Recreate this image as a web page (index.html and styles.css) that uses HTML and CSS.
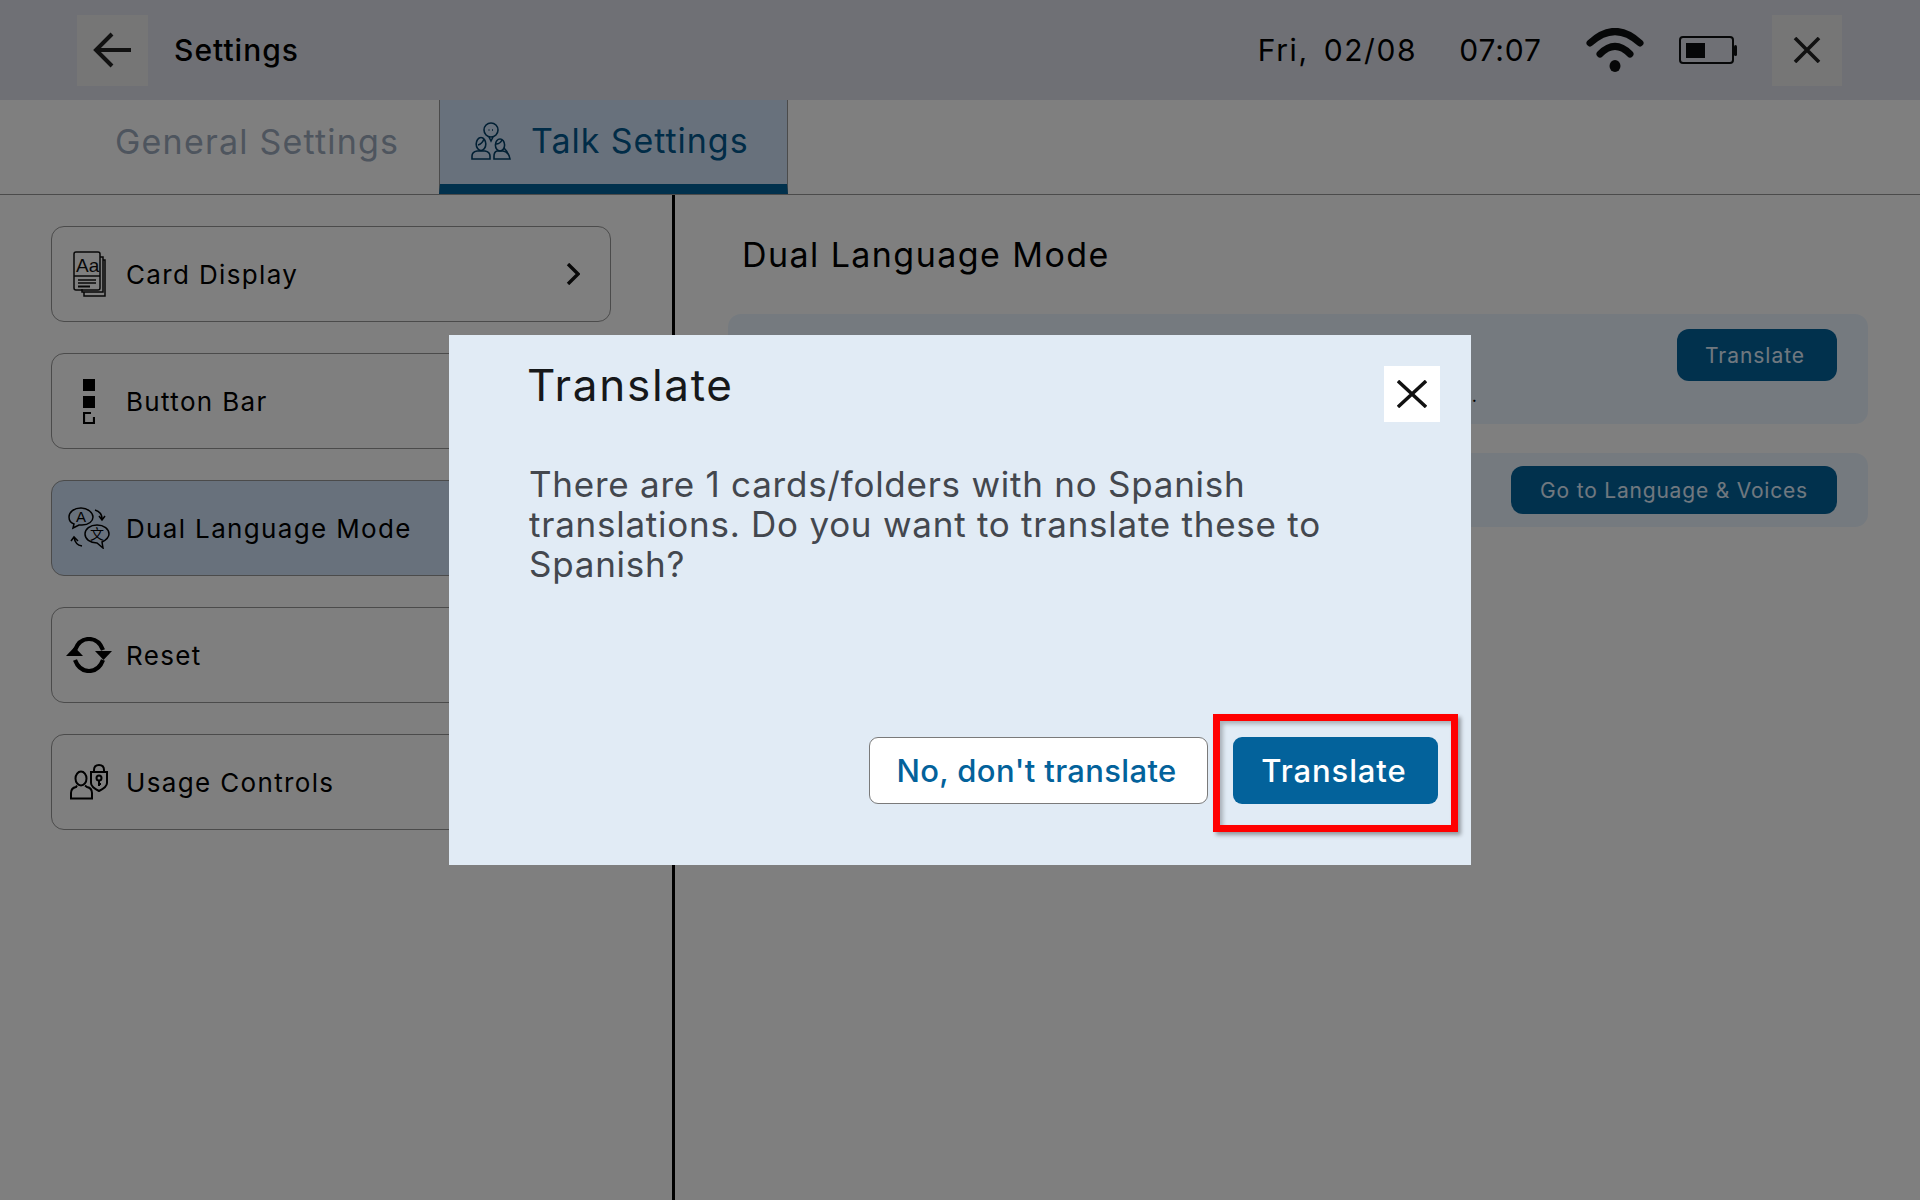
FILE: index.html
```html
<!DOCTYPE html>
<html lang="en">
<head>
<meta charset="utf-8">
<title>Settings</title>
<link rel="stylesheet" href="styles.css">
</head>
<body>
<div class="app">
  <header class="topbar">
    <button class="bar-btn" aria-label="Back">
      <svg width="40" height="36" viewBox="0 0 40 36"><path d="M38 18H3M19 2 3 18l16 16" fill="none" stroke="#222" stroke-width="4"/></svg>
    </button>
    <span class="topbar-title">Settings</span>
    <div class="status">
      <span class="date">Fri,&nbsp; 02/08</span>
      <span class="time">07:07</span>
      <svg class="wifi" width="58" height="44" viewBox="0 0 58 44"><path d="M4 15Q29-8 54 15" fill="none" stroke="#0c0f10" stroke-width="7" stroke-linecap="round"/><path d="M14 26Q29 11 44 26" fill="none" stroke="#0c0f10" stroke-width="7" stroke-linecap="round"/><ellipse cx="29" cy="38" rx="5.5" ry="6" fill="#0c0f10"/></svg>
      <svg class="battery" width="58" height="28" viewBox="0 0 58 28"><rect x="1" y="1" width="53" height="26" rx="3" fill="none" stroke="#0c0f10" stroke-width="2"/><rect x="7" y="7" width="19" height="15" fill="#0c0f10"/><rect x="55" y="9" width="3" height="11" rx="1.5" fill="#0c0f10"/></svg>
      <button class="bar-btn bar-btn-close" aria-label="Close">
        <svg width="28" height="26" viewBox="0 0 28 26"><path d="M2 1l24 24M26 1 2 25" fill="none" stroke="#222" stroke-width="3.6"/></svg>
      </button>
    </div>
  </header>

  <nav class="tabs">
    <div class="tab">General Settings</div>
    <div class="tab tab-active">
      <svg width="40" height="38" viewBox="0 0 40 38" fill="none" stroke="#023e66" stroke-width="1.6">
        <circle cx="20" cy="8" r="7"/><path d="M18 15l2 4 2-4"/><path d="M17.5 8h1M21 8h1"/>
        <ellipse cx="10" cy="22" rx="4.8" ry="6.5"/><path d="M7 23q4-1 6-6"/><path d="M1 37v-3q0-4 5-5h8q5 1 5 5v3z"/>
        <ellipse cx="29" cy="23" rx="4.6" ry="6"/><path d="M25 22q4 0 6-4"/><path d="M23 37v-3q0-4 3-5h6q6 1 7 8z"/><path d="M33 26q3 3 4 6"/>
      </svg>
      <span>Talk Settings</span>
    </div>
  </nav>

  <main class="layout">
    <aside class="sidebar">
      <div class="menu-item">
        <span class="menu-icon">
          <svg width="33" height="46" viewBox="0 0 33 46" fill="none" stroke="#111" stroke-width="1.5">
            <path d="M27 6h3v35H9v-3"/><path d="M30 9h2v36H11v-4"/>
            <rect x="1" y="1" width="26" height="38" rx="2"/>
            <path d="M1 25h26"/><path d="M5 29h18M5 32h18"/><path d="M5 35.5h12" stroke-width="2"/>
            <text class="icon-text-aa" x="3" y="21">Aa</text>
          </svg>
        </span>
        <span class="menu-label">Card Display</span>
        <svg class="chevron" width="14" height="22" viewBox="0 0 14 22"><path d="M2 1l10 10L2 21" fill="none" stroke="#111" stroke-width="3.4"/></svg>
      </div>
      <div class="menu-item">
        <span class="menu-icon">
          <svg width="12" height="45" viewBox="0 0 12 45"><rect width="12" height="12" fill="#000"/><rect y="17" width="12" height="12" fill="#000"/><path d="M8 34H1v10h10v-6" fill="none" stroke="#000" stroke-width="2.2"/></svg>
        </span>
        <span class="menu-label">Button Bar</span>
      </div>
      <div class="menu-item menu-item-active">
        <span class="menu-icon">
          <svg width="42" height="42" viewBox="0 0 42 42" fill="none" stroke="#000" stroke-width="1.5">
            <path d="M13 1C6 1 1 5 1 10c0 3 2 6 5 7l-1 4 6-3h3c7 0 11-4 11-8s-5-9-12-9z"/>
            <path d="M29 18c-7 0-12 4-12 9s5 9 12 9l6 5-1-6c4-2 7-4 7-8 0-5-5-9-12-9z"/>
            <path d="M27 3q7 2 7 9M31 9l3 4 3-4"/><path d="M14 39q-7-1-8-9M3 34l3-4 4 4"/>
            <text class="icon-text-a" x="13" y="15" text-anchor="middle">A</text>
            <text class="icon-text-zh" x="29" y="32" text-anchor="middle">文</text>
          </svg>
        </span>
        <span class="menu-label">Dual Language Mode</span>
      </div>
      <div class="menu-item">
        <span class="menu-icon">
          <svg width="46" height="36" viewBox="0 0 46 36" fill="none" stroke="#000" stroke-width="4.2">
            <path d="M9 13C12 5 17 2 23 2c6 0 11 3 14 11"/><path d="M37 23c-3 8-8 11-14 11-6 0-11-3-14-11"/>
            <path d="M0 19l8.500-9 8.500 9z" fill="#000" stroke="none"/><path d="M29 14h17l-8.500 9z" fill="#000" stroke="none"/>
          </svg>
        </span>
        <span class="menu-label">Reset</span>
      </div>
      <div class="menu-item">
        <span class="menu-icon">
          <svg width="38" height="36" viewBox="0 0 38 36" fill="none" stroke="#000" stroke-width="2">
            <ellipse cx="11" cy="14.500" rx="5.500" ry="7"/>
            <path d="M7 21.500 6 23q-5 1-5 6v5.500h21V29q0-5-5-6l-2-1.500"/>
            <path d="M21 8h16v11q0 4-8 8-8-4-8-8z"/><path d="M24 8V6q0-5 5-5t5 5v2"/>
            <circle cx="29" cy="14" r="2.500"/><path d="M29 16v6M29 20h2"/>
          </svg>
        </span>
        <span class="menu-label">Usage Controls</span>
      </div>
    </aside>

    <section class="content">
      <h2 class="content-title">Dual Language Mode</h2>
      <div class="panel panel-translate">
        <button class="panel-btn panel-btn-short">Translate</button>
        <p class="panel-note">.</p>
      </div>
      <div class="panel panel-voices">
        <button class="panel-btn panel-btn-long">Go to Language &amp; Voices</button>
      </div>
    </section>
  </main>
</div>

<div class="scrim">
  <div class="modal" role="dialog">
    <div class="modal-head">
      <h1 class="modal-title">Translate</h1>
      <button class="modal-close" aria-label="Close">
        <svg width="30" height="28" viewBox="0 0 30 28"><path d="M1 1l28 26M29 1 1 27" fill="none" stroke="#111" stroke-width="3.4"/></svg>
      </button>
    </div>
    <p class="modal-text">There are 1 cards/folders with no Spanish translations. Do you want to translate these to Spanish?</p>
    <div class="modal-actions">
      <button class="btn btn-secondary">No, don't translate</button>
      <div class="highlight-wrap">
        <button class="btn btn-primary">Translate</button>
        <span class="highlight"></span>
      </div>
    </div>
  </div>
</div>
</body>
</html>
```
FILE: styles.css
```css
* { box-sizing: border-box; }
html, body { margin: 0; height: 100%; }
body { font-family: Inter, "Open Sans", sans-serif; background: #fff; color: #000; overflow: hidden; }
button { font-family: inherit; border: 0; padding: 0; }

.app { height: 1200px; display: flex; flex-direction: column; }

.topbar { height: 100px; flex: none; background: #dfe0ea; display: flex; align-items: center; padding-left: 77px; padding-right: 78px; }
.bar-btn { width: 71px; height: 71px; background: #ececec; display: flex; align-items: center; justify-content: center; flex: none; }
.topbar-title { margin-left: 26px; font-size: 30px; font-weight: 500; letter-spacing: 1px; }
.status { margin-left: auto; display: flex; align-items: center; }
.date { font-size: 30px; letter-spacing: 1.6px; word-spacing: -2.5px; }
.time { font-size: 30px; letter-spacing: 0.9px; margin-left: 42px; }
.wifi { margin-left: 44px; }
.battery { margin-left: 35px; }
.bar-btn-close { margin-left: 35px; width: 70px; }

.tabs { height: 95px; flex: none; border-bottom: 1px solid #969696; display: flex; }
.tab { width: 439px; padding-left: 115px; display: flex; align-items: center; font-size: 34px; letter-spacing: 1.2px; color: #9daabd; padding-bottom: 12px; }
.tab-active { width: 349px; padding-left: 31px; gap: 20px; background: #d1e3f9; color: #02598f; letter-spacing: 0.95px; border-left: 1px solid #969696; border-right: 1px solid #969696; border-bottom: 10px solid #03629b; padding-bottom: 3px; height: 94px; }

.layout { flex: 1; display: flex; min-height: 0; }
.sidebar { width: 675px; flex: none; border-right: 3px solid #000; padding: 31px 0 0 51px; display: flex; flex-direction: column; gap: 31px; }
.menu-item { width: 560px; height: 96px; border: 1px solid #969696; border-radius: 13px; padding-left: 12px; padding-right: 30px; display: flex; align-items: center; font-size: 26px; }
.menu-item-active { background: #d1e3f9; }
.menu-icon { width: 50px; flex: none; display: flex; align-items: center; justify-content: center; margin-right: 12px; }
.menu-label { letter-spacing: 1.35px; }
.chevron { margin-left: auto; }
.icon-text-aa { font-family: "Liberation Sans", sans-serif; font-size: 19px; fill: #111; stroke: none; }
.icon-text-a { font-family: "Liberation Sans", sans-serif; font-size: 15px; fill: #000; stroke: none; }
.icon-text-zh { font-family: "Noto Sans CJK SC", sans-serif; font-size: 14px; fill: #000; stroke: none; }

.content { flex: 1; padding: 0 52px 0 53px; display: flex; flex-direction: column; }
.content-title { margin: 40px 0 0 14px; font-size: 34px; line-height: 40px; font-weight: 400; letter-spacing: 1.43px; }
.panel { background: #ebf5ff; border-radius: 13px; display: flex; }
.panel-translate { margin-top: 39px; height: 110px; flex-direction: column; align-items: flex-end; padding: 15px 31px 0 0; }
.panel-voices { margin-top: 29px; height: 74px; justify-content: flex-end; align-items: center; padding-right: 31px; }
.panel-note { margin: 4px 0 0; padding-right: 360px; font-size: 18px; line-height: 22px; }
.panel-btn { height: 52px; background: #03629b; color: #e0f0ff; border-radius: 12px; font-size: 21px; }
.panel-btn-short { width: 160px; letter-spacing: 0.95px; padding-right: 4px; }
.panel-btn-long { width: 326px; height: 48px; letter-spacing: 0.8px; }

.scrim { position: fixed; inset: 0; background: rgba(0, 0, 0, 0.5); display: flex; align-items: center; justify-content: center; }
.modal { width: 1022px; height: 530px; background: #e1ebf5; padding: 31px 33px 61px 78px; display: flex; flex-direction: column; }
.modal-head { display: flex; justify-content: space-between; align-items: flex-start; }
.modal-title { margin: -10px 0 0; font-size: 44px; line-height: 58px; font-weight: 400; letter-spacing: 1.7px; color: #16181a; }
.modal-close { width: 56px; height: 56px; background: #fff; margin-right: -2px; display: flex; align-items: center; justify-content: center; }
.modal-text { margin: 42px 60px 0 2px; font-size: 35px; line-height: 40px; letter-spacing: 0.75px; color: #43474e; }
.modal-actions { margin-top: auto; display: flex; justify-content: flex-end; gap: 25px; }
.btn { height: 67px; border-radius: 9px; font-size: 31px; font-weight: 500; }
.btn-secondary { width: 339px; background: #fff; color: #03629b; border: 1px solid #7a7a7a; letter-spacing: 0.35px; padding-right: 4px; }
.btn-primary { width: 205px; background: #03629b; color: #fff; display: block; letter-spacing: 0.9px; padding-right: 3px; }
.highlight-wrap { position: relative; }
.highlight { position: absolute; left: -20px; top: -23px; right: -20px; bottom: -28px; border: 7px solid #f00; box-shadow: 3px 3px 4px rgba(0, 0, 0, 0.35), inset 3px 3px 4px rgba(0, 0, 0, 0.25); }
```
